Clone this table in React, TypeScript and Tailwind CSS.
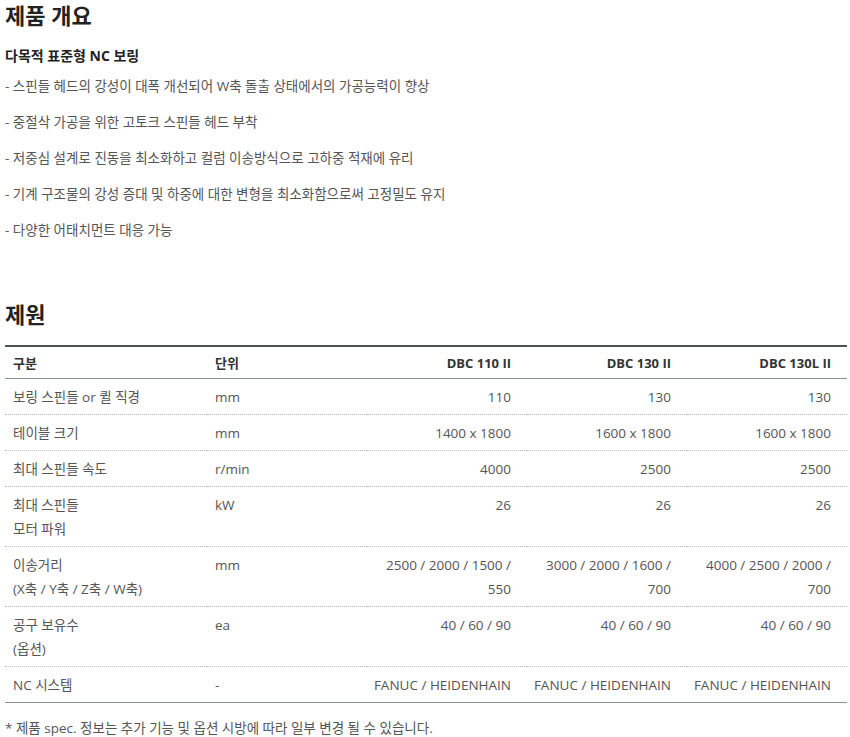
import React from 'react';

const features = [
  '- 스핀들 헤드의 강성이 대폭 개선되어 W축 돌출 상태에서의 가공능력이 향상',
  '- 중절삭 가공을 위한 고토크 스핀들 헤드 부착',
  '- 저중심 설계로 진동을 최소화하고 컬럼 이송방식으로 고하중 적재에 유리',
  '- 기계 구조물의 강성 증대 및 하중에 대한 변형을 최소화함으로써 고정밀도 유지',
  '- 다양한 어태치먼트 대응 가능',
];

type Row = { label: string[]; unit: string; values: string[] };

const rows: Row[] = [
  { label: ['보링 스핀들 or 퀼 직경'], unit: 'mm', values: ['110', '130', '130'] },
  { label: ['테이블 크기'], unit: 'mm', values: ['1400 x 1800', '1600 x 1800', '1600 x 1800'] },
  { label: ['최대 스핀들 속도'], unit: 'r/min', values: ['4000', '2500', '2500'] },
  { label: ['최대 스핀들', '모터 파워'], unit: 'kW', values: ['26', '26', '26'] },
  {
    label: ['이송거리', '(X축 / Y축 / Z축 / W축)'],
    unit: 'mm',
    values: ['2500 / 2000 / 1500 / 550', '3000 / 2000 / 1600 / 700', '4000 / 2500 / 2000 / 700'],
  },
  { label: ['공구 보유수', '(옵션)'], unit: 'ea', values: ['40 / 60 / 90', '40 / 60 / 90', '40 / 60 / 90'] },
  { label: ['NC 시스템'], unit: '-', values: ['FANUC / HEIDENHAIN', 'FANUC / HEIDENHAIN', 'FANUC / HEIDENHAIN'] },
];

const models = ['DBC 110 II', 'DBC 130 II', 'DBC 130L II'];

export default function App() {
  return (
    <div
      className="bg-white px-[5px] text-[#555]"
      style={{ fontFamily: '"Open Sans", "Noto Sans CJK KR", sans-serif' }}
    >
      {/* 제품 개요 */}
      <h2 className="text-[22px] leading-[30px] font-bold text-[#222]">제품 개요</h2>
      <h3 className="mt-[16px] text-[14px] leading-[20px] font-bold text-[#222]">다목적 표준형 NC 보링</h3>
      <div className="mt-[2px]">
        {features.map((f) => (
          <p key={f} className="h-9 flex items-center text-[13.5px]">
            {f}
          </p>
        ))}
      </div>

      {/* 제원 */}
      <h2 className="mt-[51px] text-[22px] leading-[30px] font-bold text-[#222]">제원</h2>
      <table className="mt-[16px] w-[842px] table-fixed border-collapse border-t-2 border-t-[#4b5059] border-b border-b-[#8a9099] text-[13.5px]">
        <colgroup>
          <col className="w-[202px]" />
          <col className="w-[160px]" />
          <col className="w-[160px]" />
          <col className="w-[160px]" />
          <col className="w-[160px]" />
        </colgroup>
        <thead>
          <tr className="border-b border-b-[#8a9099] text-[#333] font-bold text-[13px]">
            <th className="pl-2 pt-[6px] pb-[5px] text-left leading-[20px]">구분</th>
            <th className="pl-2 pt-[6px] pb-[5px] text-left leading-[20px]">단위</th>
            {models.map((m) => (
              <th key={m} className="pr-4 pt-[6px] pb-[5px] text-right leading-[20px]">
                {m}
              </th>
            ))}
          </tr>
        </thead>
        <tbody>
          {rows.map((r, i) => (
            <tr
              key={r.unit + i}
              className={i < rows.length - 1 ? 'border-b border-dotted border-b-[#bbb]' : ''}
            >
              <td className="pl-2 pt-[6px] pb-[5px] align-top leading-[24px]">
                {r.label.map((l) => (
                  <div key={l}>{l}</div>
                ))}
              </td>
              <td className="pl-2 pt-[6px] pb-[5px] align-top leading-[24px]">{r.unit}</td>
              {r.values.map((v, j) => (
                <td key={j} className="pr-4 pt-[6px] pb-[5px] align-top text-right leading-[24px]">
                  {v}
                </td>
              ))}
            </tr>
          ))}
        </tbody>
      </table>
      <p className="mt-[15px] text-[13.5px] leading-[20px]">* 제품 spec. 정보는 추가 기능 및 옵션 시방에 따라 일부 변경 될 수 있습니다.</p>
    </div>
  );
}
